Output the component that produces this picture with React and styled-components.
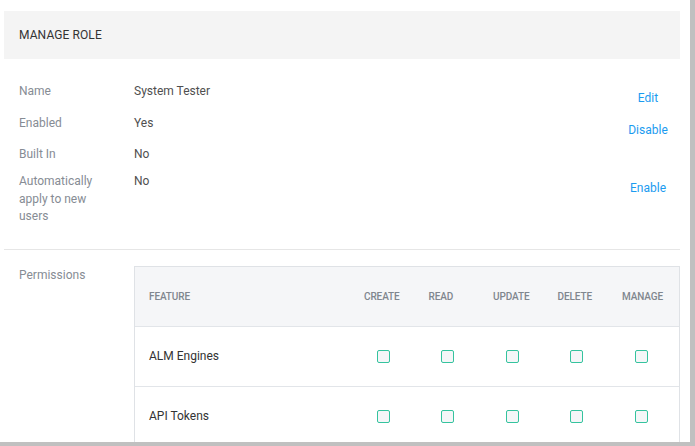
import React from "react";
import styled, { createGlobalStyle } from "styled-components";

const Global = createGlobalStyle`
  html, body { margin: 0; padding: 0; background: #c0c0c0; overflow: hidden; }
  body { font-family: Roboto, "Liberation Sans", Arial, sans-serif; }
  * { box-sizing: border-box; }
`;

const Frame = styled.div`
  width: 690px;
  height: 442px;
  background: #ffffff;
  overflow: hidden;
  padding: 11px 10px 0 4px;
`;

const Header = styled.div`
  height: 48px;
  background: #f4f4f4;
  display: flex;
  align-items: center;
  padding-left: 15px;
  font-size: 12px;
  color: #333333;
  letter-spacing: 0.1px;
`;

const Details = styled.div`
  padding: 24px 0 23px 15px;
  border-bottom: 1px solid #e6e6e6;
`;

const Row = styled.div`
  display: grid;
  grid-template-columns: 115px 1fr 64px;
  min-height: 27px;
  font-size: 12px;
  line-height: 17.5px;
`;

const Label = styled.div`
  color: #868c94;
`;

const Value = styled.div`
  color: #4f4f4f;
`;

const Action = styled.a`
  display: block;
  text-align: center;
  color: #1b9bf0;
  padding: 7px 0;
  cursor: pointer;
  text-decoration: none;
`;

const Permissions = styled.div`
  display: grid;
  grid-template-columns: 115px 1fr;
  padding: 16px 0 0 15px;
  font-size: 12px;
  line-height: 17.5px;
`;

const PermLabel = styled(Label)`
  padding-top: 1px;
`;

const Table = styled.div`
  border: 1px solid #dfe2e6;
  border-bottom: none;
`;

const TRow = styled.div`
  display: grid;
  grid-template-columns: 216px repeat(5, 64.5px) 1fr;
  align-items: center;
  height: ${(p) => (p.$head ? 59 : 60)}px;
  background: ${(p) => (p.$head ? "#f5f6f8" : "#ffffff")};
  border-top: ${(p) => (p.$head ? "none" : "1px solid #e2e5e9")};
`;

const HeadCell = styled.div`
  font-size: 10px;
  font-weight: 500;
  color: #80868e;
  padding-left: ${(p) => (p.$first ? 14 : 13)}px;
  padding-top: 2px;
  letter-spacing: -0.1px;
`;

const FeatureCell = styled.div`
  padding-left: 14px;
  padding-top: 2px;
  color: #333333;
  font-size: 12px;
`;

const BoxCell = styled.div`
  display: flex;
  justify-content: center;
`;

const Check = styled.span`
  display: block;
  width: 13px;
  height: 13px;
  border: 1.5px solid #35c39e;
  border-radius: 2px;
  background: #f5f6f8;
`;

const cols = ["CREATE", "READ", "UPDATE", "DELETE", "MANAGE"];
const features = ["ALM Engines", "API Tokens"];

export default function App() {
  return (
    <>
      <Global />
      <Frame>
        <Header>MANAGE ROLE</Header>
        <Details>
          <Row>
            <Label>Name</Label>
            <Value>System Tester</Value>
            <Action>Edit</Action>
          </Row>
          <Row>
            <Label>Enabled</Label>
            <Value>Yes</Value>
            <Action>Disable</Action>
          </Row>
          <Row>
            <Label>Built In</Label>
            <Value>No</Value>
            <div />
          </Row>
          <Row>
            <Label>
              Automatically
              <br />
              apply to new
              <br />
              users
            </Label>
            <Value>No</Value>
            <Action>Enable</Action>
          </Row>
        </Details>
        <Permissions>
          <PermLabel>Permissions</PermLabel>
          <Table>
            <TRow $head>
              <HeadCell $first>FEATURE</HeadCell>
              {cols.map((c) => (
                <HeadCell key={c}>{c}</HeadCell>
              ))}
              <div />
            </TRow>
            {features.map((f) => (
              <TRow key={f}>
                <FeatureCell>{f}</FeatureCell>
                {cols.map((c) => (
                  <BoxCell key={c}>
                    <Check />
                  </BoxCell>
                ))}
                <div />
              </TRow>
            ))}
          </Table>
        </Permissions>
      </Frame>
    </>
  );
}
